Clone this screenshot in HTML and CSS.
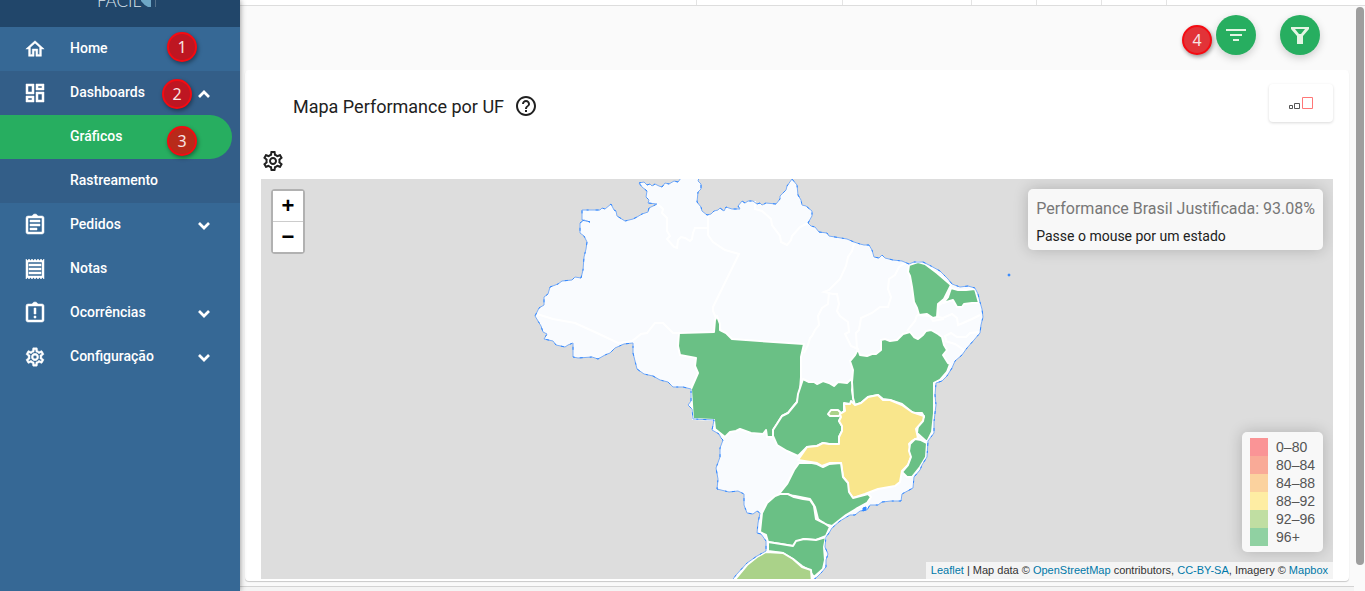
FILE: index.html
```html
<!DOCTYPE html>
<html lang="pt-BR">
<head>
  <meta charset="UTF-8">
  <meta name="viewport" content="width=device-width, initial-scale=1">
  <title>Mapa Performance por UF</title>
  <link rel="stylesheet" href="styles.css">
</head>
<body>

  <svg class="defs" aria-hidden="true">
    <symbol id="chevron" viewBox="0 0 14 14"><path d="M2 4l5 5 5-5" fill="none" stroke="currentColor" stroke-width="2.7"/></symbol>
    <symbol id="gear" viewBox="0 0 24 24"><path d="M19.43 12.98c.04-.32.07-.64.07-.98s-.03-.66-.07-.98l2.11-1.65c.19-.15.24-.42.12-.64l-2-3.46c-.12-.22-.39-.3-.61-.22l-2.49 1c-.52-.4-1.08-.73-1.69-.98l-.38-2.65C14.46 2.18 14.25 2 14 2h-4c-.25 0-.46.18-.49.42l-.38 2.65c-.61.25-1.17.59-1.69.98l-2.49-1c-.23-.09-.49 0-.61.22l-2 3.46c-.13.22-.07.49.12.64l2.11 1.65c-.04.32-.07.65-.07.98s.03.66.07.98l-2.11 1.65c-.19.15-.24.42-.12.64l2 3.46c.12.22.39.3.61.22l2.49-1c.52.4 1.08.73 1.69.98l.38 2.65c.03.24.24.42.49.42h4c.25 0 .46-.18.49-.42l.38-2.65c.61-.25 1.17-.59 1.69-.98l2.49 1c.23.09.49 0 .61-.22l2-3.46c.12-.22.07-.49-.12-.64l-2.11-1.65zm-1.98-1.71c.04.31.05.52.05.73s-.02.43-.05.73l-.14 1.13.89.7 1.08.84-.7 1.21-1.27-.51-1.04-.42-.9.68c-.43.32-.84.56-1.25.73l-1.06.43-.16 1.13-.2 1.35h-1.4l-.35-2.48-1.06-.43c-.43-.18-.83-.41-1.23-.71l-.91-.7-1.06.43-1.27.51-.7-1.21 1.97-1.54-.14-1.13c-.03-.31-.05-.54-.05-.74s.02-.43.05-.73l.14-1.13-1.97-1.54.7-1.21 2.33.94.9-.68c.43-.32.84-.56 1.25-.73l1.06-.43.36-2.48h1.39l.35 2.48 1.06.43c.43.18.83.41 1.23.71l.91.7 2.33-.94.7 1.21-1.97 1.54.14 1.13zM12 8c-2.21 0-4 1.79-4 4s1.79 4 4 4 4-1.79 4-4-1.79-4-4-4zm0 6c-1.1 0-2-.9-2-2s.9-2 2-2 2 .9 2 2-.9 2-2 2z"/></symbol>
  </svg>

  <aside class="sidebar">
    <div class="brand">
      <span class="brand-name">FACIL</span>
      <svg class="brand-leaf" width="16" height="24" viewBox="0 0 16 24"><path d="M0 9l10-6v15H7Q3 16 0 12z" fill="#6ea7c6"/><path d="M14.500 4v14" stroke="#54708a"/></svg>
    </div>
    <nav>
      <a class="item" href="#home">
        <svg class="icon" viewBox="0 0 24 24"><path d="M12 5.690l5 4.500V18h-2v-6H9v6H7v-7.810l5-4.500M12 3L2 12h3v8h6v-6h2v6h6v-8h3z"/></svg>
        <span>Home</span>
        <b class="step">1</b>
      </a>
      <div class="group">
        <a class="item" href="#dashboards">
          <svg class="icon wide" viewBox="0 0 24 24"><path d="M19 5v2h-4V5h4M9 5v6H5V5h4m10 8v6h-4v-6h4M9 17v2H5v-2h4M21 3h-8v6h8V3zM11 3H3v10h8V3zm10 8h-8v10h8V11zm-10 4H3v6h8v-6z"/></svg>
          <span>Dashboards</span>
          <svg class="arrow up"><use href="#chevron"/></svg>
          <b class="step step-two">2</b>
        </a>
        <a class="item sub active" href="#graficos"><span>Gráficos</span><b class="step step-three">3</b></a>
        <a class="item sub" href="#rastreamento"><span>Rastreamento</span></a>
      </div>
      <a class="item" href="#pedidos">
        <svg class="icon wide" viewBox="0 0 24 24"><path d="M7 15h7v2H7zm0-4h10v2H7zm0-4h10v2H7zm12-4h-4.200C14.400 1.800 13.300 1 12 1s-2.400.8-2.800 2H5a2 2 0 0 0-2 2v14c0 1.100.9 2 2 2h14c1.100 0 2-.9 2-2V5c0-1.100-.9-2-2-2zm0 16H5V5h14v14z"/></svg>
        <span>Pedidos</span>
        <svg class="arrow"><use href="#chevron"/></svg>
      </a>
      <a class="item" href="#notas">
        <svg class="icon wide" viewBox="0 0 24 24"><path d="M19.500 3.500L18 2l-1.500 1.500L15 2l-1.500 1.500L12 2l-1.500 1.500L9 2 7.500 3.500 6 2 4.500 3.500 3 2v20l1.500-1.500L6 22l1.500-1.500L9 22l1.500-1.500L12 22l1.500-1.500L15 22l1.500-1.500L18 22l1.500-1.500L21 22V2zM19 19H5V5h14zM6 15h12v2H6zm0-4h12v2H6zm0-4h12v2H6z"/></svg>
        <span>Notas</span>
      </a>
      <a class="item" href="#ocorrencias">
        <svg class="icon wide" viewBox="0 0 24 24"><path d="M11 15h2v2h-2zm0-8h2v6h-2zm8-4h-4.200C14.400 1.800 13.300 1 12 1s-2.400.8-2.800 2H5a2 2 0 0 0-2 2v14c0 1.100.9 2 2 2h14c1.100 0 2-.9 2-2V5c0-1.100-.9-2-2-2zm0 16H5V5h14v14z"/></svg>
        <span>Ocorrências</span>
        <svg class="arrow"><use href="#chevron"/></svg>
      </a>
      <a class="item" href="#configuracao">
        <svg class="icon"><use href="#gear"/></svg>
        <span>Configuração</span>
        <svg class="arrow"><use href="#chevron"/></svg>
      </a>
    </nav>
  </aside>

  <div class="page">
    <div class="topbar"><i></i><i></i><i></i><i></i><i></i><i></i></div>
    <main class="main">
      <div class="toolbar">
        <b class="step step-four">4</b>
        <button class="fab" aria-label="Ordenar"><svg width="24" height="24" viewBox="0 0 24 24"><path d="M2 6h20v2H2zm4 5h12v2H6zm3 5h6v2H9z"/></svg></button>
        <button class="fab" aria-label="Filtrar"><svg width="24" height="24" viewBox="0 0 24 24"><path fill-rule="evenodd" d="M3 4h18v2l-6 7v8H9v-8L3 6zM7 6l4 5h2l4-5z"/></svg></button>
      </div>

      <section class="card">
        <header class="card-head">
          <h1>Mapa Performance por UF</h1>
          <svg class="help" viewBox="0 0 24 24"><path d="M11 18h2v-2h-2v2zm1-16C6.480 2 2 6.480 2 12s4.480 10 10 10 10-4.480 10-10S17.520 2 12 2zm0 18c-4.410 0-8-3.590-8-8s3.590-8 8-8 8 3.590 8 8-3.590 8-8 8zm0-14c-2.210 0-4 1.790-4 4h2c0-1.100.9-2 2-2s2 .9 2 2c0 2-3 1.750-3 5h2c0-2.250 3-2.500 3-5 0-2.210-1.790-4-4-4z"/></svg>
          <button class="size" aria-label="Tamanho"><svg width="26" height="14" viewBox="0 0 26 14"><path d="M1.500 9.500h3v3h-3zM6.500 7.500h5v5h-5z" fill="none" stroke="#555"/><path d="M14.500 1.500h10v11h-10z" fill="none" stroke="#f77"/></svg></button>
        </header>
        <button class="settings" aria-label="Opções do mapa"><svg width="24" height="24"><use href="#gear"/></svg></button>

        <div class="map">
          <svg class="brazil" viewBox="261 179 1072 400" preserveAspectRatio="xMidYMid slice">
            <!-- country -->
            <path id="country" class="none" d="M639 183L644 182 647 185 650 184 652 186 655 184 659 186 662 187 665 183 669 184 674 181 678 182 681 178H699L698 181 701 184 701 189 698 192 697 202 701 207 702 211 707 215 711 214 714 211 718 210 720 208 724 211 726 207 732 209 740 209 738 206 742 201 745 203 748 201 753 201 757 204 760 203 762 205 766 203 776 204 780 199 780 196 786 190 787 186 792 179 797 185 798 195 801 200 802 205 806 206 812 211 812 216 808 223 811 226 815 227 819 232 827 233 829 236 835 237 847 239 854 242 860 244 864 245 869 245 872 250 874 257 879 258 882 255 885 258 893 260 902 261 909 264 914 262 923 262 931 266 940 271 948 279 952 284 960 287 968 286 975 288 978 294 980 302 982 309 983 317 981 325 980 333 974 340 967 348 962 355 955 361 952 368 947 376 942 381 936 383 935 395 936 405 935 413 934 422 934 433 928 441 927 457 922 465 920 470 914 477 913 488 902 494 901 501 891 501 882 502 878 505 870 505 867 510 860 511 855 515 850 515 840 521 832 528 829 533 826 537 825 547 828 554 826 560 826 567 822 572 817 577 811 582H731L736 575 747 563 757 556 766 551V541L761 534 757 533 758 523 760 513 757 511 753 514 747 513 744 505 744 494 738 491 729 492 717 489 718 479 716 468 720 457 720 448 723 440 721 438 719 434 712 430 714 420 693 419 692 409 688 405 691 401 691 389 683 387 673 387 668 382 660 380 653 376 644 374 637 369 635 361 633 353V343L624 344 615 348 610 353 605 355 598 359 592 357 578 358 573 357V343L568 345 565 347 556 345 553 341 544 339 547 334 543 332 541 326 535 316 539 308 544 305V297L548 294 550 287 558 284 562 281 572 280 575 277 581 278 583 270 584 257 586 249 587 242 584 236 580 233V223L584 220 590 222 582 220V210H600L602 208 605 209 611 204 614 210 616 211 617 216 625 221 629 220 633 219 637 217 642 214 648 212 649 208 657 204 648 203 649 200 646 197 647 191 642 187z"/>
            <!-- borders of the states without data -->
            <path class="border" d="M657 204L661 207 663 209 662 213 667 218 667 231 670 236 667 239 674 247 677 248 678 240 681 237 685 238 690 241 692 239 693 233 695 228H708M708 215V235L713 242 725 250 739 254 713 307V311L716 318M537 314L553 319 575 323 597 333 618 343 632 341 636 338 641 334 647 333 655 323 663 323 670 330 673 333H679M755 201V209L762 211 771 219 772 225 780 236 781 242 787 245 791 240 792 236 800 227 808 223M854 244L852 251 848 257 846 266 840 279 829 290 824 292 833 294 837 294 839 304 837 311 840 316 848 322 849 332 845 334 851 346 858 349M829 292L828 304 822 308 818 316 819 325 815 330 812 336 810 338 808 345 804 353M905 263L899 267 895 275 889 279 888 289 891 297 888 307 880 307 872 313 861 318 859 330 856 333 857 349M942 303L937 307 938 317 943 318 952 314 957 318 958 325 963 323 972 319 980 315M917 315L915 321 910 327 907 331M917 315L930 316 933 321 944 319M946 340L945 336 951 333 957 337 966 337 970 333 980 332M945 341L955 344 964 350"/>
            <!-- states with data -->
            <g class="state">
              <path class="high" d="M679 333L714 332 715 320 717 316 720 324 720 330 726 333 732 339 760 341 804 344 801 357V377L800 390 797 402 792 408 788 413 782 416 777 424 773 430 774 437 767 437 766 430 763 434 751 433 740 429 736 431 730 432 725 437 715 429 714 420 693 419 691 389 698 373 695 366 696 358 680 355 678 346z"/>
              <path class="high" d="M803 379L809 382 814 382 817 384 823 381 829 383 834 386 838 382 847 383 851 379 853 385 852 390 854 402 850 404 844 403V411L840 414 841 417 839 421 842 426V431L839 437 839 444 829 444 823 443 817 446 807 447 798 456 787 451 777 445 773 436V430L782 416 788 413 797 402 798 394z"/>
              <path class="high" d="M850 361L855 355 858 349 860 355 867 356 872 354 876 354 881 350V340L885 339 890 341 897 340 903 334 910 332 914 337 918 339 923 335 926 331 931 330 938 334 942 337 944 345 947 350 943 355 948 363 950 364 947 372 940 380 934 383 934 413 932 432 927 442 917 433 918 425 924 417 922 413 913 413 902 404 890 400 883 399 878 395 868 397 861 403 855 405 853 398 852 382 853 370z"/>
              <path class="mid" d="M828 414L831 410 838 410 841 413 839 416 830 416z"/>
              <path class="yellow" d="M798 460L807 447 817 446 823 443 829 444 839 444 839 437 842 431 842 426 839 421 841 417 840 414 845 411 844 404 850 404 851 401 855 405 861 403 868 397 878 395 883 400 890 400 902 405 912 412 924 416 923 421 916 429 918 438 912 441 909 444 912 454 908 465 902 471 900 482 895 486 878 489 865 494 853 498 848 491 848 483 843 477 841 463 830 463 822 466 817 463z"/>
              <path class="high" d="M915 439L921 440 927 443 926 457 920 467 912 477 907 477 902 472 908 465 911 457 909 451 910 444z"/>
              <path class="high" d="M799 463L812 463 817 464 823 467 829 464 841 463 843 477 848 483 849 492 853 498 868 494 871 497 867 503 856 509 846 515 832 526 824 524 818 519 815 507 810 499 795 496 779 494 787 484 794 470z"/>
              <path class="high" d="M775 496L780 494 788 494 794 497 803 499 810 500 814 506 816 519 824 523 830 527 826 536 816 540 804 539 796 542 793 546 781 544 768 542 766 535 760 532 762 513 767 503z"/>
              <path class="high" d="M768 542L781 544 793 546 796 541 804 539 816 540 826 537 824 547 825 560 823 569 814 577 809 570 802 566 793 559 783 553 768 551z"/>
              <path class="mid" d="M733 582L747 565 757 557 766 552 783 553 793 559 802 567 811 570 812 582z"/>
              <path class="high" d="M909 265L918 262 925 264 937 273 951 285 944 299 938 304 937 317 933 318 927 314 919 315 917 308 914 302 912 287 910 276 908 272z"/>
              <path class="high" d="M951 288L958 290 966 290 975 289 979 303 972 303 964 304 962 307H957L953 300 943 303 948 297z"/>
            </g>
            <use href="#country" class="coast"/>
            <use href="#country" class="coast coast-dots"/>
            <path class="island" d="M863 508L866 507V510L863 511z"/>
            <circle class="island" cx="1009" cy="275" r="1"/>
          </svg>
          <div class="zoom">
            <button aria-label="Aproximar">+</button>
            <button aria-label="Afastar">−</button>
          </div>
          <div class="info box">
            <h2>Performance Brasil Justificada: 93.08%</h2>
            <p>Passe o mouse por um estado</p>
          </div>
          <ul class="legend box">
            <li><i class="c0"></i>0–80</li>
            <li><i class="c80"></i>80–84</li>
            <li><i class="c84"></i>84–88</li>
            <li><i class="c88"></i>88–92</li>
            <li><i class="c92"></i>92–96</li>
            <li><i class="c96"></i>96+</li>
          </ul>
          <div class="credits"><a href="#leaflet">Leaflet</a> | Map data © <a href="#osm">OpenStreetMap</a> contributors, <a href="#license">CC-BY-SA</a>, Imagery © <a href="#mapbox">Mapbox</a></div>
        </div>
      </section>
    </main>
    <footer class="footer"></footer>
    <div class="scroll"></div>
  </div>

</body>
</html>
```
FILE: styles.css
```css
* {
  box-sizing: border-box;
}
body {
  display: flex;
  height: 100vh;
  margin: 0;
  overflow: hidden;
  background: #fafafa;
  color: #212121;
  font-family: Roboto, sans-serif;
  font-size: 14px;
}
h1, h2, p, ul {
  margin: 0;
  padding: 0;
  font-weight: 400;
}
button {
  padding: 0;
  border: 0;
  cursor: pointer;
}
svg {
  fill: currentColor;
}
.defs {
  position: absolute;
  width: 0;
  height: 0;
}

/* sidebar */
.sidebar {
  position: relative;
  z-index: 2;
  flex: 0 0 240px;
  background: #366895;
  color: #fff;
  box-shadow: 0 0 6px rgba(0,0,0,.45);
}
.brand {
  display: flex;
  justify-content: center;
  height: 27px;
  padding-left: 14px;
  overflow: hidden;
  background: #21466a;
}
.brand-name {
  margin-top: -11px;
  font: 300 17px/24px Lato, sans-serif;
  color: #dbe5ed;
}
.brand-leaf {
  margin-top: -11px;
}
.group {
  background: #335e88;
}
.item {
  position: relative;
  display: flex;
  align-items: center;
  height: 44px;
  padding: 0 29px 2px 23px;
  color: #fff;
  font-weight: 500;
  text-decoration: none;
}
.item span {
  flex: 1;
}
.icon {
  width: 22px;
  height: 22px;
  margin: 2px 24px 0 1px;
  stroke: currentColor;
  stroke-width: .5;
}
.icon.wide {
  width: 24px;
  height: 24px;
  margin: 2px 23px 0 0;
}
.arrow {
  width: 14px;
  height: 14px;
  margin-top: 4px;
}
.arrow.up {
  transform: rotate(180deg);
}
.item.sub {
  padding-left: 70px;
}
.item.active {
  margin-right: 8px;
  border-radius: 0 22px 22px 0;
  background: #27ae60;
}

/* numbered markers laid over the screen */
.step {
  position: absolute;
  top: 5px;
  left: 167px;
  width: 30px;
  height: 30px;
  border: 2px solid #f50b12;
  border-radius: 50%;
  background: #be1622;
  box-shadow: 1px 2px 4px rgba(0,0,0,.4);
  color: #f7e4e4;
  font: 400 16px/26px "Noto Sans", sans-serif;
  text-align: center;
}
.step-two {
  top: 8px;
  left: 162px;
}
.step-three {
  top: 11px;
  background: #b82a1a;
}
.step-four {
  top: 19px;
  right: 137px;
  left: auto;
  background: #e23338;
}

/* page */
.page {
  position: relative;
  display: flex;
  flex: 1;
  flex-direction: column;
  min-width: 0;
}
.topbar {
  display: grid;
  grid-template-columns: 457fr 146fr 129fr 65fr 65fr 65fr 198fr;
  flex: 0 0 6px;
  border-bottom: 1px solid #ddd;
  background: #fff;
}
.topbar i {
  border-right: 1px solid #e4e4e4;
}
.main {
  display: flex;
  flex: 1;
  flex-direction: column;
  min-height: 0;
  padding: 0 16px 5px 5px;
}
.toolbar {
  position: relative;
  display: flex;
  flex: 0 0 64px;
  justify-content: flex-end;
  gap: 24px;
  padding: 9px 29px 0 0;
}
.fab {
  display: flex;
  align-items: center;
  justify-content: center;
  width: 40px;
  height: 40px;
  border-radius: 50%;
  background: #27ae60;
  box-shadow: 0 3px 8px rgba(0,0,0,.18);
  color: #e4f5e3;
}
.card {
  display: flex;
  flex: 1;
  flex-direction: column;
  min-height: 0;
  padding: 0 16px 2px;
  border-radius: 4px;
  background: #fff;
  box-shadow: 0 1px 1px rgba(0,0,0,.2);
}
.card-head {
  display: flex;
  align-items: center;
  height: 72px;
  padding-left: 32px;
}
.card-head h1 {
  font-size: 18px;
}
.help {
  width: 24px;
  height: 24px;
  margin-left: 10px;
}
.size {
  display: flex;
  align-items: center;
  justify-content: center;
  width: 64px;
  height: 38px;
  margin: 0 0 6px auto;
  border-radius: 4px;
  background: #fff;
  box-shadow: 0 1px 3px rgba(0,0,0,.15);
}
.settings {
  width: 24px;
  height: 24px;
  margin: 7px 0 6px;
  background: none;
  color: #212121;
}
.footer {
  flex: 0 0 5px;
  margin-right: 11px;
  border-top: 1px solid #d3d3d3;
  background: #f4f4f4;
}
.scroll {
  position: absolute;
  top: 7px;
  right: 1px;
  bottom: 26px;
  width: 8px;
  border-radius: 4px;
  background: #9e9e9e;
}

/* map */
.map {
  position: relative;
  flex: 1;
  min-height: 0;
  overflow: hidden;
  background: #ddd;
}
.brazil {
  display: block;
  width: 100%;
  height: 100%;
}
.none {
  fill: #f9fbfe;
}
.border {
  fill: none;
  stroke: #fff;
  stroke-width: 2;
}
.state {
  stroke: #fff;
  stroke-width: 2;
  stroke-linejoin: round;
}
.high {
  fill: #6ac085;
}
.mid {
  fill: #aad289;
}
.yellow {
  fill: #f9e68c;
}
.coast {
  fill-opacity: 0;
  stroke: #7aadf7;
  stroke-width: 1;
}
.coast-dots {
  stroke: #3388ff;
  stroke-dasharray: 2 7 3 5;
}
.island {
  fill: #3388ff;
  stroke: #3388ff;
}
.zoom {
  position: absolute;
  top: 10px;
  left: 10px;
  border: 2px solid #b1b1b1;
  border-radius: 4px;
}
.zoom button {
  display: block;
  width: 30px;
  height: 30px;
  background: #fff;
  color: #000;
  font: bold 22px/30px "Liberation Sans", sans-serif;
}
.zoom button:first-child {
  height: 31px;
  border-bottom: 1px solid #ccc;
}
.box {
  position: absolute;
  right: 10px;
  border-radius: 5px;
  background: #f8f8f8;
  box-shadow: 0 0 15px rgba(0,0,0,.2);
}
.info {
  top: 10px;
  padding: 9px 8px 3px;
}
.info h2 {
  margin-bottom: 6px;
  color: #777;
  font-size: 16px;
  line-height: 22px;
}
.info p {
  line-height: 21px;
}
.legend {
  bottom: 27px;
  padding: 6px 8px;
  color: #555;
  font-family: "Liberation Sans", sans-serif;
  line-height: 18px;
  list-style: none;
}
.legend li {
  display: flex;
}
.legend i {
  width: 18px;
  height: 18px;
  margin-right: 8px;
}
.c0 { background: #fa9496; }
.c80 { background: #f9aa97; }
.c84 { background: #fbd29e; }
.c88 { background: #feeda3; }
.c92 { background: #c0dea2; }
.c96 { background: #90d1a2; }
.credits {
  position: absolute;
  right: 0;
  bottom: 0;
  padding: 0 5px;
  background: #f4f4f4;
  color: #333;
  font: 11px/17px "Liberation Sans", sans-serif;
}
.credits a {
  color: #0078a8;
  text-decoration: none;
}
```
